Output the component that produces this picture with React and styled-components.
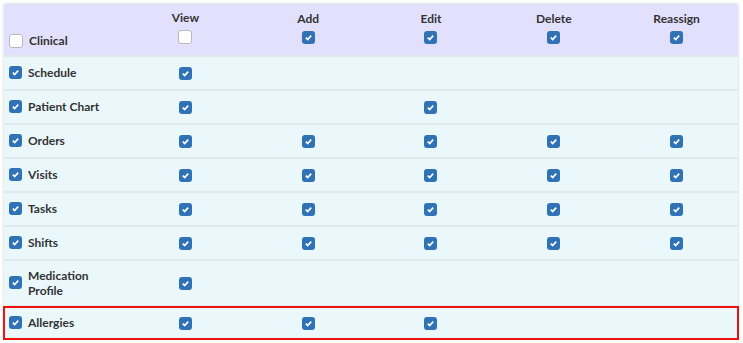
import React from "react";
import styled, { createGlobalStyle } from "styled-components";

const GlobalStyle = createGlobalStyle`
  body {
    margin: 0;
    background: #fff;
    font-family: Lato, "Open Sans", "Liberation Sans", sans-serif;
  }
`;

const Page = styled.div`
  padding: 4px 5px 4px 4px;
`;

const Panel = styled.div`
  width: 734px;
  box-shadow: 0 0 3px #c9ccd0;
  background: #eaf7fb;
`;

const Row = styled.div`
  display: grid;
  grid-template-columns: 120px repeat(5, 1fr);
  min-height: ${(p) => (p.tall ? "44px" : "32px")};
  background: ${(p) => (p.head ? "#e2e0fc" : "#eaf7fb")};
  border-bottom: ${(p) => (p.marked ? "none" : "2px solid #dfeaed")};
  outline: ${(p) => (p.marked ? "2px solid #f01010" : "none")};
  outline-offset: -1px;
  position: relative;
  color: #333;
  font-size: 12px;
  font-weight: 700;
`;

const LabelCell = styled.div`
  display: flex;
  align-items: ${(p) => (p.head ? "flex-end" : "center")};
  gap: 6px;
  padding: ${(p) => (p.head ? "0 8px 7px 5px" : "0 8px 1px 5px")};
  line-height: 15px;
`;

const ActionCell = styled.div`
  display: flex;
  flex-direction: column;
  align-items: center;
  justify-content: center;
`;

const HeadCell = styled.div`
  display: flex;
  flex-direction: column;
  align-items: center;
  justify-content: flex-end;
  gap: 5px;
  padding-bottom: 11px;
`;

const Box = styled.span`
  flex: none;
  box-sizing: border-box;
  width: 13px;
  height: 13px;
  border-radius: 3px;
  display: inline-flex;
  align-items: center;
  justify-content: center;
  background: ${(p) => (p.on ? "#2f72b6" : "#fff")};
  border: ${(p) => (p.on ? "none" : "1px solid #b9b9bd")};
  ${(p) => !p.on && "width: 14px; height: 14px;"}
`;

const Check = ({ on }) => (
  <Box on={on}>
    {on && (
      <svg width="9" height="9" viewBox="0 0 10 10">
        <path d="M2 5.2 L4.1 7.2 L8 3" fill="none" stroke="#fff" strokeWidth="1.9" />
      </svg>
    )}
  </Box>
);

const cols = ["View", "Add", "Edit", "Delete", "Reassign"];

const rows = [
  { name: "Schedule", perms: [1, 0, 0, 0, 0] },
  { name: "Patient Chart", perms: [1, 0, 1, 0, 0] },
  { name: "Orders", perms: [1, 1, 1, 1, 1] },
  { name: "Visits", perms: [1, 1, 1, 1, 1] },
  { name: "Tasks", perms: [1, 1, 1, 1, 1] },
  { name: "Shifts", perms: [1, 1, 1, 1, 1] },
  { name: "Medication Profile", perms: [1, 0, 0, 0, 0], tall: true },
  { name: "Allergies", perms: [1, 1, 1, 0, 0], marked: true },
];

const App = () => {
  return (
    <Page>
      <GlobalStyle />
      <Panel>
        <Row head tall style={{ minHeight: 51 }}>
          <LabelCell head>
            <Check on={false} />
            Clinical
          </LabelCell>
          {cols.map((c, i) => (
            <HeadCell key={c}>
              {c}
              <Check on={i !== 0} />
            </HeadCell>
          ))}
        </Row>
        {rows.map((r) => (
          <Row key={r.name} tall={r.tall} marked={r.marked}>
            <LabelCell>
              <Check on />
              {r.name}
            </LabelCell>
            {r.perms.map((p, i) => (
              <ActionCell key={i}>{p ? <Check on /> : null}</ActionCell>
            ))}
          </Row>
        ))}
      </Panel>
    </Page>
  );
};

export default App;
